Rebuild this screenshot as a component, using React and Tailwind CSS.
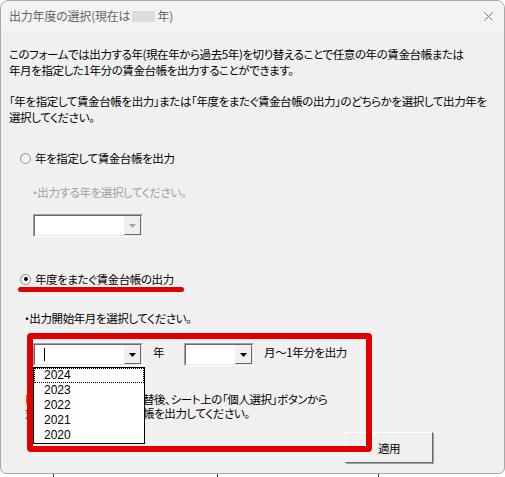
import React from "react"

const jp = "font-['Noto_Sans_CJK_JP',sans-serif] [font-feature-settings:'palt'] tracking-[-0.4px]"

function Radio({ checked }) {
  return (
    <div className="flex h-[11px] w-[11px] items-center justify-center rounded-full border border-[#8e8e8e] bg-gradient-to-br from-[#e6e6e6] to-white">
      {checked && <div className="h-[4px] w-[4px] rounded-full bg-black" />}
    </div>
  )
}

function Combo({ width, disabled, cursor }) {
  return (
    <div className={`flex h-[23px] border border-t-[#a0a0a0] border-l-[#a0a0a0] border-b-white border-r-white ${width}`}>
      <div className="flex flex-1 border border-t-[#696969] border-l-[#696969] border-b-[#e3e3e3] border-r-[#e3e3e3] bg-white">
        <div className="flex flex-1 items-center pl-[9px]">
          {cursor && <div className="h-[13px] w-px bg-black" />}
        </div>
        <div className="flex w-[17px] items-center justify-center border border-t-[#f0f0f0] border-l-[#f0f0f0] border-b-[#696969] border-r-[#696969] bg-[#f0f0f0]">
          <svg width="7" height="4" viewBox="0 0 7 4">
            <path d="M0 0h7L3.5 4z" fill={disabled ? "#a3a3a3" : "#000"} />
          </svg>
        </div>
      </div>
    </div>
  )
}

export default function App() {
  const years = ["2024", "2023", "2022", "2021", "2020"]

  return (
    <div className={`h-[477px] w-[505px] overflow-hidden bg-white text-[11.5px] text-black ${jp}`}>
      {/* dialog window */}
      <div className="relative h-[474px] rounded-t-[8px] rounded-b-[6px] border border-[#a9a9a9] bg-[#f0f0f0]">
        {/* title bar */}
        <div className="flex h-[30px] items-center justify-between rounded-t-[8px] bg-[#f3f3f3] pl-[8px] pr-[11px] text-[12px] tracking-[-0.2px] text-[#666666]">
          <div className="flex items-center">
            <span>出力年度の選択(現在は</span>
            <span className="mx-[2px] inline-block h-[11px] w-[23px] bg-[#dcdcdc]" />
            <span>年)</span>
          </div>
          <svg width="9" height="9" viewBox="0 0 9 9">
            <path d="M0.5 0.5l8 8M8.5 0.5l-8 8" stroke="#7a7a7a" strokeWidth="1" />
          </svg>
        </div>

        {/* body */}
        <div className="whitespace-nowrap leading-[16px]">
          <p className="mt-[15px] px-[8px]">
            このフォームでは出力する年(現在年から過去5年)を切り替えることで任意の年の賃金台帳または
            <br />
            年月を指定した1年分の賃金台帳を出力することができます。
          </p>
          <p className="mt-[15px] px-[8px]">
            「年を指定して賃金台帳を出力」または「年度をまたぐ賃金台帳の出力」のどちらかを選択して出力年を
            <br />
            選択してください。
          </p>

          <div className="mt-[25px] flex h-[16px] items-center gap-[4px] pl-[19px]">
            <Radio />
            <span>年を指定して賃金台帳を出力</span>
          </div>
          <div className="mt-[18px] h-[16px] pl-[31px] text-[#a0a0a0]">・出力する年を選択してください。</div>
          <div className="mt-[14px] pl-[32px]">
            <Combo width="w-[110px]" disabled />
          </div>

          <div className="mt-[34px] flex h-[16px] items-center gap-[4px] pl-[19px]">
            <Radio checked />
            <span>年度をまたぐ賃金台帳の出力</span>
          </div>
          <div className="mt-[23px] h-[16px] pl-[23px]">・出力開始年月を選択してください。</div>

          <div className="mt-[17px] flex items-start pl-[32px]">
            <Combo width="w-[110px]" cursor />
            <span className="ml-[10px] mt-px">年</span>
            <div className="ml-[20px]">
              <Combo width="w-[70px]" />
            </div>
            <span className="ml-[10px] mt-px">月～1年分を出力</span>
          </div>

          <div className="mt-[26px] pl-[24px] leading-[14px]">
            <div>
              <span className="inline-block w-[118px] overflow-hidden align-top">
                <span className="text-[#e06000]">■</span>出力年の切
              </span>
              替後、シート上の「個人選択」ボタンから
            </div>
            <div>
              <span className="inline-block w-[118px] overflow-hidden align-top">対象者を選択して賃金台</span>
              帳を出力してください。
            </div>
          </div>

          <div className="ml-[344px] mt-[12px] flex h-[31px] w-[88px] items-center justify-center border border-t-white border-l-white border-b-[#696969] border-r-[#696969] bg-[#f0f0f0] shadow-[1px_1px_0_#a0a0a0]">
            適用
          </div>
        </div>

        {/* annotation: red underline */}
        <div className="absolute left-[17px] top-[286px] h-[5px] w-[166px] rounded-full bg-[#e00000]" />

        {/* open dropdown list */}
        <div className="absolute left-[32px] top-[366px] w-[112px] border border-black bg-white font-['Liberation_Sans',sans-serif] text-[12px] leading-[15px] tracking-normal">
          {years.map((y, i) => (
            <div key={y} className={`h-[15px] pl-[10px] ${i === 0 ? "outline-1 -outline-offset-1 outline-dotted outline-black" : ""}`}>
              {y}
            </div>
          ))}
        </div>

        {/* annotation: red box */}
        <div className="absolute left-[26px] top-[332px] h-[119px] w-[345px] rounded-[4px] border-[6px] border-[#e00000]" />
      </div>

      {/* background behind the dialog */}
      <div className="flex h-[3px]">
        <span className="ml-[53px] w-px bg-[#333]" />
        <span className="ml-[163px] w-px bg-[#333]" />
        <span className="ml-[160px] w-px bg-[#333]" />
      </div>
    </div>
  )
}
